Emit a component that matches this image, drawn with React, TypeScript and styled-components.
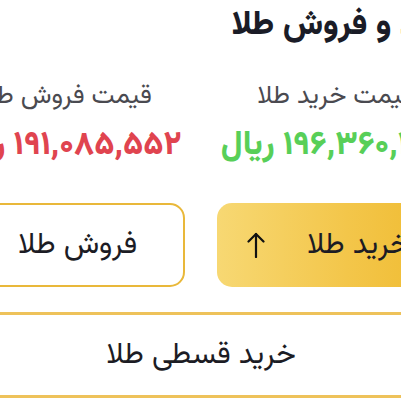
import React from 'react';
import styled, { createGlobalStyle } from 'styled-components';

const GlobalStyle = createGlobalStyle`
  html, body {
    margin: 0;
    padding: 0;
    background: #ffffff;
    overflow: hidden;
  }
  body {
    font-family: 'Vazirmatn', 'Noto Sans Arabic', 'DejaVu Sans', sans-serif;
  }
`;

const prices = [
  { label: 'قیمت خرید طلا', value: '۱۹۶,۳۶۰,۴۲۰', color: '#58cf58' },
  { label: 'قیمت فروش طلا', value: '۱۹۱,۰۸۵,۵۵۲', color: '#e0444f' },
];

const Arrow: React.FC<{ down?: boolean }> = ({ down }) => (
  <svg
    width="18"
    height="26"
    viewBox="0 0 18 26"
    fill="none"
    stroke="#111"
    strokeWidth="2.2"
    strokeLinecap="round"
    strokeLinejoin="round"
    style={down ? { transform: 'rotate(180deg)' } : undefined}
  >
    <path d="M9 25V2" />
    <path d="M1.5 9.5L9 2l7.5 7.5" />
  </svg>
);

const App: React.FC = () => {
  return (
    <>
      <GlobalStyle />
      <Page dir="rtl">
        <Title>خرید و فروش طلا</Title>
        <PriceGrid>
          {prices.map((p) => (
            <PriceCol key={p.label}>
              <PriceLabel>{p.label}</PriceLabel>
              <PriceValue $color={p.color}>
                {p.value} ریال
              </PriceValue>
            </PriceCol>
          ))}
        </PriceGrid>
        <ButtonRow>
          <TradeButton $filled $gap={42}>
            <span>خرید طلا</span>
            <Arrow />
          </TradeButton>
          <TradeButton $gap={20}>
            <span>فروش طلا</span>
            <Arrow down />
          </TradeButton>
        </ButtonRow>
        <InstallmentButton>خرید قسطی طلا</InstallmentButton>
      </Page>
    </>
  );
};

const Page = styled.div`
  width: 506px;
  margin-left: -52px;
  direction: rtl;
  color: #1c1c24;
`;

const Title = styled.h1`
  margin: 0 -11px 0 0;
  font-size: 33.5px;
  font-weight: 800;
  line-height: 52px;
  color: #1a1c27;
  white-space: nowrap;
`;

const PriceGrid = styled.div`
  display: grid;
  grid-template-columns: 1fr 1fr;
  column-gap: 32px;
  margin-top: 28px;
`;

const PriceCol = styled.div`
  display: flex;
  flex-direction: column;
  align-items: center;
  gap: 12px;
`;

const PriceLabel = styled.div`
  font-size: 26px;
  line-height: 34px;
  color: #4a4a50;
  white-space: nowrap;
`;

const PriceValue = styled.div<{ $color: string }>`
  font-size: 33px;
  font-weight: 800;
  line-height: 40px;
  color: ${({ $color }) => $color};
  white-space: nowrap;
`;

const ButtonRow = styled.div`
  display: grid;
  grid-template-columns: 1fr 1fr;
  column-gap: 32px;
  margin-top: 37px;
`;

const TradeButton = styled.button<{ $filled?: boolean; $gap: number }>`
  height: 84px;
  display: flex;
  align-items: center;
  justify-content: flex-end;
  gap: ${({ $gap }) => $gap}px;
  padding: 0 0 0 30px;
  border-radius: 15px;
  font-family: inherit;
  font-size: 30px;
  color: #1c1c24;
  cursor: pointer;
  border: ${({ $filled }) => ($filled ? 'none' : '2px solid #e9b83a')};
  background: ${({ $filled }) =>
    $filled ? 'linear-gradient(to right, #f7d873 0%, #f3c64a 55%, #efb92c 100%)' : '#ffffff'};
`;

const InstallmentButton = styled.button`
  width: 100%;
  height: 86px;
  margin-top: 25px;
  border: 3px solid #eec25a;
  border-radius: 16px;
  background: #ffffff;
  font-family: inherit;
  font-size: 30px;
  color: #1c1c24;
  cursor: pointer;
`;

export default App;
